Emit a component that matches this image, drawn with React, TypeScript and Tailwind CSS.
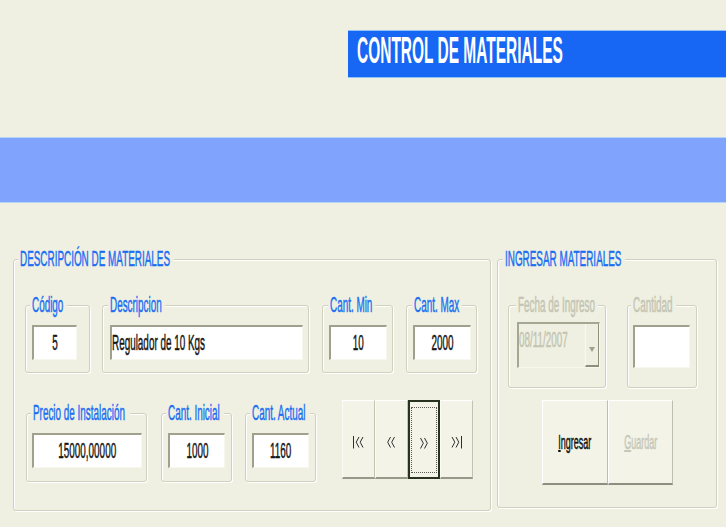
import clsx from 'clsx';
import type { ReactNode } from 'react';

const LABEL_BLUE = 'text-[#1B6EF3]';
const LABEL_OFF = 'text-[#C3C4B3]';

// the source screen was squeezed sideways, so every text run is narrowed with scale-x
const Sq = ({ children, className }: { children: ReactNode; className?: string }) => (
  <span className={clsx('inline-block whitespace-nowrap scale-x-[0.45] [-webkit-text-stroke:0.5px]', className)}>{children}</span>
);

interface FrameProps {
  label: string;
  legendClass: string;
  disabled?: boolean;
  className?: string;
  children: ReactNode;
}

const Frame = ({ label, legendClass, disabled, className, children }: FrameProps) => (
  <fieldset
    className={clsx(
      'min-w-0 shrink-0 rounded-[3px] border border-[#D0D0BF] shadow-[inset_1px_1px_0_#fff,1px_1px_0_#fff]',
      className,
    )}
  >
    <legend
      className={clsx(
        'h-[20px] bg-[#EFF0E1] px-[2px] text-[22px] leading-[20px]',
        disabled ? LABEL_OFF : LABEL_BLUE,
        legendClass,
      )}
    >
      <Sq className="origin-left">{label}</Sq>
    </legend>
    {children}
  </fieldset>
);

const Field = ({ children, className }: { children?: ReactNode; className?: string }) => (
  <div
    className={clsx(
      'flex items-center border-t-2 border-l-2 border-r border-b border-t-[#9FA18C] border-l-[#9FA18C] border-r-[#F7F7EE] border-b-[#F7F7EE] bg-white text-[22px] leading-[20px] text-[#151515]',
      className,
    )}
  >
    {children}
  </div>
);

const Chevrons = ({ dir, bar }: { dir: 'left' | 'right'; bar?: boolean }) => {
  const flip = dir === 'right' ? 'scale-x-[-1]' : '';
  return bar ? (
    <svg width="12" height="14" viewBox="0 0 12 14" className={clsx('translate-y-[3px]', flip)} fill="none" stroke="#2F2F2F" strokeWidth="1">
      <path d="M1.5 1v12.5" />
      <path d="M7 2 4.2 7.2 7 12.5" />
      <path d="M11 2 8.2 7.2 11 12.5" />
    </svg>
  ) : (
    <svg width="10" height="14" viewBox="0 0 10 14" className={clsx('translate-y-[3px]', flip)} fill="none" stroke="#2F2F2F" strokeWidth="1">
      <path d="M4.5 2 1.7 7.2 4.5 12.5" />
      <path d="M8.5 2 5.7 7.2 8.5 12.5" />
    </svg>
  );
};

const NAV_BTN =
  'relative flex items-center justify-center border-t border-l border-t-white border-l-[#FBFBF5] border-r border-r-[#C2C3B1] border-b-2 border-b-[#96988A] bg-[#F3F3E8]';

const BTN =
  'flex items-center justify-center border-t border-l border-t-white border-l-white border-r border-r-[#BDBEAB] border-b-2 border-b-[#8D8F7E] bg-[#F3F3E8] text-[20px] leading-[20px]';

export default function App() {
  return (
    <div className="h-[527px] w-[726px] overflow-hidden bg-[#EFF0E1] font-['Liberation_Sans',Arial,sans-serif]">
      <div className="pt-[30px]">
        <div className="ml-[348px] h-[48px] border-y border-[#8FC3F7] bg-[#1766F4] pl-[9px] pt-[2px]">
          <span className="inline-block origin-left scale-x-[0.43] whitespace-nowrap text-[36px] font-bold leading-[36px] text-white">
            CONTROL DE MATERIALES
          </span>
        </div>
      </div>

      <div className="mt-[59px] h-[66px] border-y border-[#B3D6F5] bg-[#80A4FE]" />

      <div className="mt-[46px] flex items-start">
        {/* descripción */}
        <Frame label="DESCRIPCIÓN DE MATERIALES" legendClass="ml-[4px] w-[156px]" className="ml-[13px] w-[478px] pb-[28px]">
          <div className="pl-[11px] pt-[26px]">
            <div className="flex items-start">
              <Frame label="Código" legendClass="ml-[4px] w-[37px]" className="w-[65px]">
                <div className="pl-[6px] pt-[10px] pb-[12px]">
                  <Field className="h-[35px] w-[45px] justify-center">
                    <Sq className="origin-center">5</Sq>
                  </Field>
                </div>
              </Frame>
              <Frame label="Descripcion" legendClass="ml-[5px] w-[57px]" className="ml-[12px] w-[207px]">
                <div className="pl-[7px] pt-[10px] pb-[12px]">
                  <Field className="h-[35px] w-[193px]">
                    <Sq className="origin-left">Regulador de 10 Kgs</Sq>
                  </Field>
                </div>
              </Frame>
              <Frame label="Cant. Min" legendClass="ml-[5px] w-[47px]" className="ml-[13px] w-[71px]">
                <div className="pl-[6px] pt-[10px] pb-[12px]">
                  <Field className="h-[35px] w-[58px] justify-center">
                    <Sq className="origin-center">10</Sq>
                  </Field>
                </div>
              </Frame>
              <Frame label="Cant. Max" legendClass="ml-[5px] w-[50px]" className="ml-[13px] w-[71px]">
                <div className="pl-[6px] pt-[10px] pb-[12px]">
                  <Field className="h-[35px] w-[58px] justify-center">
                    <Sq className="origin-center">2000</Sq>
                  </Field>
                </div>
              </Frame>
            </div>

            <div className="mt-[27px] flex items-start">
              <Frame label="Precio de Instalación" legendClass="ml-[4px] w-[99px]" className="ml-[1px] mt-[3px] w-[121px]">
                <div className="pl-[5px] pt-[10px] pb-[13px]">
                  <Field className="h-[35px] w-[110px] justify-center">
                    <Sq className="origin-center">15000,00000</Sq>
                  </Field>
                </div>
              </Frame>
              <Frame label="Cant. Inicial" legendClass="ml-[4px] w-[58px]" className="ml-[14px] mt-[3px] w-[71px]">
                <div className="pl-[6px] pt-[10px] pb-[13px]">
                  <Field className="h-[35px] w-[57px] justify-center">
                    <Sq className="origin-center">1000</Sq>
                  </Field>
                </div>
              </Frame>
              <Frame label="Cant. Actual" legendClass="ml-[4px] w-[60px]" className="ml-[13px] mt-[3px] w-[71px]">
                <div className="pl-[6px] pt-[10px] pb-[13px]">
                  <Field className="h-[35px] w-[57px] justify-center">
                    <Sq className="origin-center">1160</Sq>
                  </Field>
                </div>
              </Frame>

              <div className="ml-[26px] grid h-[79px] w-[131px] grid-cols-4">
                <div className={NAV_BTN}>
                  <Chevrons dir="left" bar />
                </div>
                <div className={NAV_BTN}>
                  <Chevrons dir="left" />
                </div>
                <div className="relative flex items-center justify-center border-2 border-[#28321F] bg-[#F3F3E8]">
                  <div className="absolute inset-x-[1px] top-[5px] bottom-[4px] border border-dotted border-[#5A5A52]" />
                  <Chevrons dir="right" />
                </div>
                <div className={NAV_BTN}>
                  <Chevrons dir="right" bar />
                </div>
              </div>
            </div>
          </div>
        </Frame>

        {/* ingresar */}
        <Frame label="INGRESAR MATERIALES" legendClass="ml-[5px] w-[122px]" className="ml-[6px] w-[220px] pb-[22px]">
          <div className="pl-[10px] pt-[26px]">
            <div className="flex items-start">
              <Frame label="Fecha de Ingreso" legendClass="ml-[7px] w-[82px]" disabled className="w-[98px]">
                <div className="pl-[8px] pt-[7px] pb-[19px]">
                  <div className="flex h-[46px] w-[83px] border-t-2 border-l-2 border-r border-b border-t-[#A5A793] border-l-[#A5A793] border-r-[#F7F7EE] border-b-[#F7F7EE]">
                    <div className="min-w-0 flex-1 pt-[6px] text-[22px] leading-[20px] text-[#C3C4B3]">
                      <Sq className="origin-left">08/11/2007</Sq>
                    </div>
                    <div className="flex w-[14px] shrink-0 items-center justify-center border-l border-l-[#FAFAF2] border-r border-r-[#8D8F7B] border-b-2 border-b-[#8D8F7B] bg-[#EEEFE0]">
                      <svg width="6" height="5" viewBox="0 0 6 5" className="translate-y-[5px]">
                        <path d="M0 0h6L3 5z" fill="#9FA18D" />
                      </svg>
                    </div>
                  </div>
                </div>
              </Frame>
              <Frame label="Cantidad" legendClass="ml-[3px] w-[45px]" disabled className="ml-[21px] w-[70px]">
                <div className="pl-[5px] pt-[10px] pb-[19px]">
                  <Field className="h-[43px] w-[57px]" />
                </div>
              </Frame>
            </div>

            <div className="mt-[12px] pl-[34px]">
              <div className="grid h-[85px] w-[131px] grid-cols-2">
                <div className={clsx(BTN, 'text-[#111]')}>
                  <Sq className="origin-center">
                    <span className="underline">I</span>ngresar
                  </Sq>
                </div>
                <div className={clsx(BTN, 'text-[#C6C7B7]')}>
                  <Sq className="origin-center">
                    <span className="underline">G</span>uardar
                  </Sq>
                </div>
              </div>
            </div>
          </div>
        </Frame>
      </div>
    </div>
  );
}
